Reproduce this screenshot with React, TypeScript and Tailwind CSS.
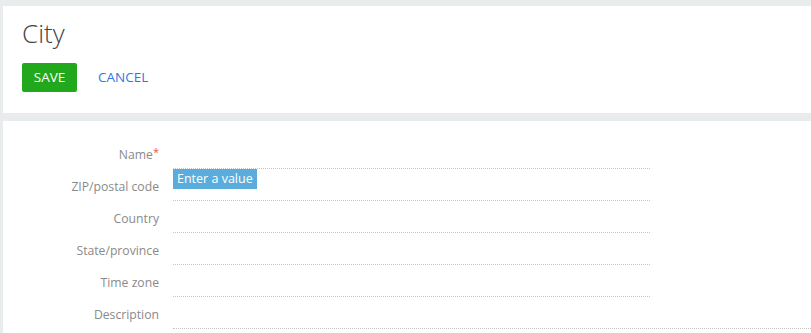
const fields = [
  { label: "Name", required: true, wide: false },
  { label: "ZIP/postal code", required: false, wide: false },
  { label: "Country", required: false, wide: false },
  { label: "State/province", required: false, wide: false },
  { label: "Time zone", required: false, wide: false },
  { label: "Description", required: false, wide: true },
];

export default function App() {
  return (
    <div
      className="w-[811px] h-[333px] overflow-hidden bg-[#e9ecec] pt-[6px] pl-[3px] flex flex-col gap-[8px]"
      style={{ fontFamily: '"Open Sans", "Noto Sans", sans-serif' }}
    >
      <div className="bg-white h-[107px] shrink-0 pl-[19px] pt-[10px]">
        <h1 className="text-[26px] leading-[34px] font-light text-[#444]">City</h1>
        <div className="flex items-center gap-[21px] mt-[13px]">
          <button className="h-[29px] w-[55px] rounded-[2px] bg-[#22a81d] text-white text-[13.5px] font-medium">
            SAVE
          </button>
          <button className="text-[13.5px] text-[#3476e3]">CANCEL</button>
        </div>
      </div>

      <div className="bg-white flex-1 pt-[16px]">
        {fields.map((f, i) => (
          <div key={f.label} className="flex h-[32px]">
            <div className="w-[156px] shrink-0 text-right text-[12.2px] leading-[20px] pt-[8px] text-[#8a8a8a]">
              {f.label}
              {f.required && <span className="text-[#f0553a] text-[11px] relative top-[-3px]">*</span>}
            </div>
            <div
              className={
                f.wide
                  ? "relative ml-[14px] flex-1 border-b border-dotted border-[#c4c4c4]"
                  : "relative ml-[14px] w-[477px] border-b border-dotted border-[#c4c4c4]"
              }
            >
              {i === 0 && (
                <div className="absolute left-0 top-full mt-[1px] h-[20px] px-[4px] bg-[#59acdb] text-white text-[12.5px] leading-[20px] whitespace-nowrap z-10">
                  Enter a value
                </div>
              )}
            </div>
          </div>
        ))}
      </div>
    </div>
  );
}
